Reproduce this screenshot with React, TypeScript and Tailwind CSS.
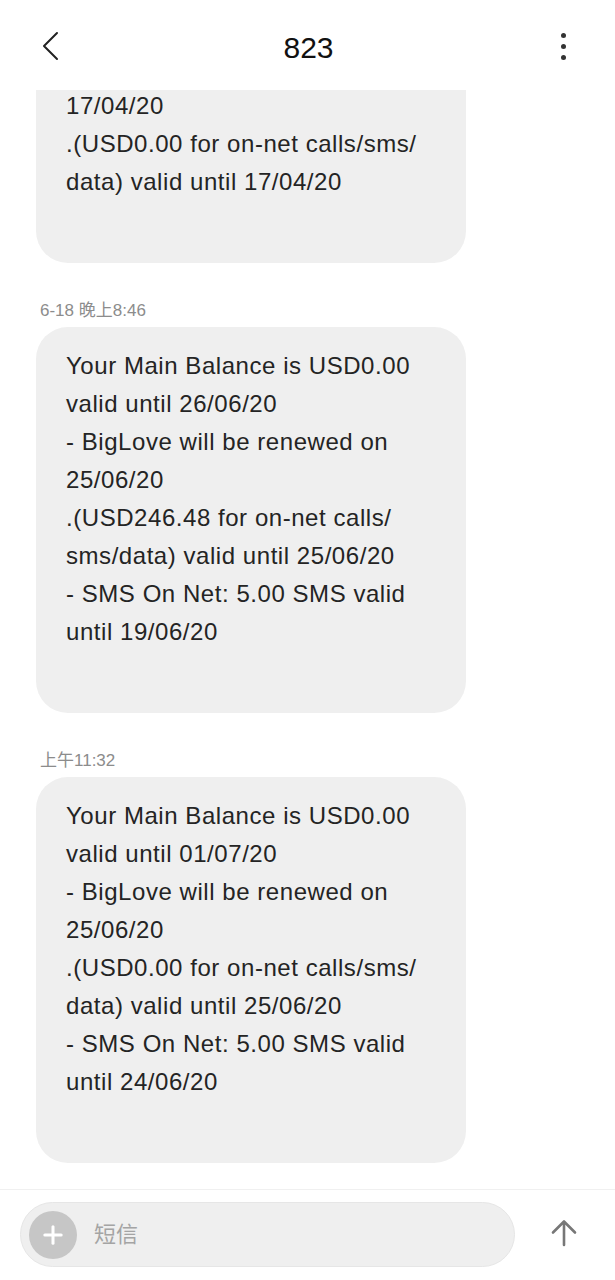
import { Plus } from "lucide-react";

type Msg = { time?: string; lines: string[]; clipTop?: boolean };

const messages: Msg[] = [
  {
    clipTop: true,
    lines: ["17/04/20", ".(USD0.00 for on-net calls/sms/", "data) valid until 17/04/20"],
  },
  {
    time: "6-18 晚上8:46",
    lines: [
      "Your Main Balance is USD0.00",
      "valid until 26/06/20",
      "- BigLove will be renewed on",
      "25/06/20",
      ".(USD246.48 for on-net calls/",
      "sms/data) valid until 25/06/20",
      "- SMS On Net: 5.00 SMS valid",
      "until 19/06/20",
    ],
  },
  {
    time: "上午11:32",
    lines: [
      "Your Main Balance is USD0.00",
      "valid until 01/07/20",
      "- BigLove will be renewed on",
      "25/06/20",
      ".(USD0.00 for on-net calls/sms/",
      "data) valid until 25/06/20",
      "- SMS On Net: 5.00 SMS valid",
      "until 24/06/20",
    ],
  },
];

const font = { fontFamily: '"Liberation Sans", "Noto Sans CJK SC", sans-serif' };

export default function App() {
  return (
    <div className="w-[615px] h-[1280px] bg-white flex flex-col overflow-hidden" style={font}>
      <header className="h-[90px] shrink-0 flex items-center justify-between pl-[40px] pr-[49px] relative z-10 bg-white">
        <svg width="20" height="30" viewBox="0 0 20 30" className="mt-[2px]">
          <path d="M17 2 L4 15 L17 28" fill="none" stroke="#222" strokeWidth="2" strokeLinecap="round" strokeLinejoin="round" />
        </svg>
        <div className="text-[30px] text-[#111] mt-[4px] ml-[-4px]">823</div>
        <div className="flex flex-col gap-[6px] mt-[2px]">
          <span className="w-[5px] h-[5px] rounded-full bg-[#333]" />
          <span className="w-[5px] h-[5px] rounded-full bg-[#333]" />
          <span className="w-[5px] h-[5px] rounded-full bg-[#333]" />
        </div>
      </header>

      <main className="flex-1 overflow-hidden px-[36px]">
        {messages.map((m, i) => (
          <div key={i}>
            {m.time && (
              <div className="mt-[37px] mb-[5px] ml-[4px] text-[17px] leading-[22px] text-[#8c8c8c]">
                {m.time}
              </div>
            )}
            <div
              className={`w-[430px] bg-[#efefef] pl-[30px] pr-[8px] pb-[62px] text-[24px] tracking-[0.55px] leading-[38px] text-[#242424] ${
                m.clipTop ? "mt-[-3px] pt-0 rounded-b-[32px]" : "pt-[20px] rounded-[32px]"
              }`}
            >
              {m.lines.map((l, j) => (
                <div key={j} className="whitespace-nowrap">
                  {l}
                </div>
              ))}
            </div>
          </div>
        ))}
      </main>

      <footer className="h-[91px] shrink-0 border-t border-[#f0f0f0] flex items-start pt-[12px] pl-[20px] pr-[38px]">
        <div className="w-[495px] h-[65px] rounded-full bg-[#efefef] border border-[#e6e6e6] flex items-center pl-[8px]">
          <div className="w-[48px] h-[48px] rounded-full bg-[#c6c6c6] flex items-center justify-center">
            <Plus className="w-[28px] h-[28px] text-white" strokeWidth={2.6} />
          </div>
          <span className="ml-[17px] text-[22px] text-[#a4a4a4]">短信</span>
        </div>
        <div className="flex-1 flex justify-end pt-[17px]">
          <svg width="26" height="28" viewBox="0 0 26 28">
            <path d="M13 26 V3 M2 13.5 L13 2.5 L24 13.5" fill="none" stroke="#777" strokeWidth="2.6" strokeLinecap="round" strokeLinejoin="round" />
          </svg>
        </div>
      </footer>
    </div>
  );
}
